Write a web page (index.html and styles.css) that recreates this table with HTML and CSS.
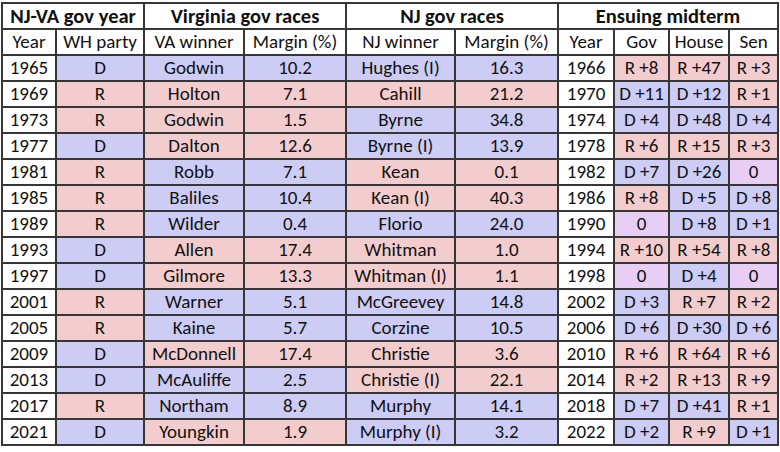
FILE: index.html
```html
<!DOCTYPE html>
<html lang="en">
<head>
<meta charset="utf-8">
<title>NJ-VA governor races</title>
<link rel="stylesheet" href="styles.css">
</head>
<body>
<table class="grid">
  <colgroup>
    <col class="c-year"><col class="c-wh"><col class="c-vaw"><col class="c-vam">
    <col class="c-njw"><col class="c-njm"><col class="c-my"><col class="c-gov">
    <col class="c-house"><col class="c-sen">
  </colgroup>
  <thead>
    <tr class="group">
      <th colspan="2">NJ-VA gov year</th>
      <th colspan="2">Virginia gov races</th>
      <th colspan="2">NJ gov races</th>
      <th colspan="4">Ensuing midterm</th>
    </tr>
    <tr class="sub">
      <th>Year</th><th>WH party</th><th>VA winner</th><th>Margin (%)</th>
      <th>NJ winner</th><th>Margin (%)</th><th>Year</th><th>Gov</th><th>House</th><th>Sen</th>
    </tr>
  </thead>
  <tbody>
    <tr><td>1965</td><td class="b">D</td><td class="b">Godwin</td><td class="b">10.2</td><td class="b">Hughes (I)</td><td class="b">16.3</td><td>1966</td><td class="r">R +8</td><td class="r">R +47</td><td class="r">R +3</td></tr>
    <tr><td>1969</td><td class="r">R</td><td class="r">Holton</td><td class="r">7.1</td><td class="r">Cahill</td><td class="r">21.2</td><td>1970</td><td class="b">D +11</td><td class="b">D +12</td><td class="r">R +1</td></tr>
    <tr><td>1973</td><td class="r">R</td><td class="r">Godwin</td><td class="r">1.5</td><td class="b">Byrne</td><td class="b">34.8</td><td>1974</td><td class="b">D +4</td><td class="b">D +48</td><td class="b">D +4</td></tr>
    <tr><td>1977</td><td class="b">D</td><td class="r">Dalton</td><td class="r">12.6</td><td class="b">Byrne (I)</td><td class="b">13.9</td><td>1978</td><td class="r">R +6</td><td class="r">R +15</td><td class="r">R +3</td></tr>
    <tr><td>1981</td><td class="r">R</td><td class="b">Robb</td><td class="b">7.1</td><td class="r">Kean</td><td class="r">0.1</td><td>1982</td><td class="b">D +7</td><td class="b">D +26</td><td class="p">0</td></tr>
    <tr><td>1985</td><td class="r">R</td><td class="b">Baliles</td><td class="b">10.4</td><td class="r">Kean (I)</td><td class="r">40.3</td><td>1986</td><td class="r">R +8</td><td class="b">D +5</td><td class="b">D +8</td></tr>
    <tr><td>1989</td><td class="r">R</td><td class="b">Wilder</td><td class="b">0.4</td><td class="b">Florio</td><td class="b">24.0</td><td>1990</td><td class="p">0</td><td class="b">D +8</td><td class="b">D +1</td></tr>
    <tr><td>1993</td><td class="b">D</td><td class="r">Allen</td><td class="r">17.4</td><td class="r">Whitman</td><td class="r">1.0</td><td>1994</td><td class="r">R +10</td><td class="r">R +54</td><td class="r">R +8</td></tr>
    <tr><td>1997</td><td class="b">D</td><td class="r">Gilmore</td><td class="r">13.3</td><td class="r">Whitman (I)</td><td class="r">1.1</td><td>1998</td><td class="p">0</td><td class="b">D +4</td><td class="p">0</td></tr>
    <tr><td>2001</td><td class="r">R</td><td class="b">Warner</td><td class="b">5.1</td><td class="b">McGreevey</td><td class="b">14.8</td><td>2002</td><td class="b">D +3</td><td class="r">R +7</td><td class="r">R +2</td></tr>
    <tr><td>2005</td><td class="r">R</td><td class="b">Kaine</td><td class="b">5.7</td><td class="b">Corzine</td><td class="b">10.5</td><td>2006</td><td class="b">D +6</td><td class="b">D +30</td><td class="b">D +6</td></tr>
    <tr><td>2009</td><td class="b">D</td><td class="r">McDonnell</td><td class="r">17.4</td><td class="r">Christie</td><td class="r">3.6</td><td>2010</td><td class="r">R +6</td><td class="r">R +64</td><td class="r">R +6</td></tr>
    <tr><td>2013</td><td class="b">D</td><td class="b">McAuliffe</td><td class="b">2.5</td><td class="r">Christie (I)</td><td class="r">22.1</td><td>2014</td><td class="r">R +2</td><td class="r">R +13</td><td class="r">R +9</td></tr>
    <tr><td>2017</td><td class="r">R</td><td class="b">Northam</td><td class="b">8.9</td><td class="b">Murphy</td><td class="b">14.1</td><td>2018</td><td class="b">D +7</td><td class="b">D +41</td><td class="r">R +1</td></tr>
    <tr><td>2021</td><td class="b">D</td><td class="r">Youngkin</td><td class="r">1.9</td><td class="b">Murphy (I)</td><td class="b">3.2</td><td>2022</td><td class="b">D +2</td><td class="r">R +9</td><td class="b">D +1</td></tr>
  </tbody>
</table>
</body>
</html>
```
FILE: styles.css
```css
html, body {
  margin: 0;
  padding: 0;
  background: #ffffff;
}
body {
  padding: 2px 0 0 1px;
  font-family: Carlito, Lato, "Open Sans", sans-serif;
  font-size: 19px;
  color: #111111;
}
.grid {
  border-collapse: collapse;
  table-layout: fixed;
  width: 776px;
}
.grid th, .grid td {
  border: 2px solid #363636;
  height: 24px;
  padding: 0;
  text-align: center;
  white-space: nowrap;
  overflow: hidden;
  line-height: 22px;
}
.grid tr { height: 26px; }
.group th {
  font-weight: 700;
  font-size: 20.5px;
}
.sub th { font-weight: 400; }
.c-year { width: 54px; }
.c-wh { width: 88px; }
.c-vaw { width: 100px; }
.c-vam { width: 102px; }
.c-njw { width: 109px; }
.c-njm { width: 103px; }
.c-my { width: 56px; }
.c-gov { width: 55px; }
.c-house { width: 60px; }
.c-sen { width: 49px; }
.b { background: #ccccf5; }
.r { background: #f3cdcd; }
.p { background: #e8cdf5; }
```
